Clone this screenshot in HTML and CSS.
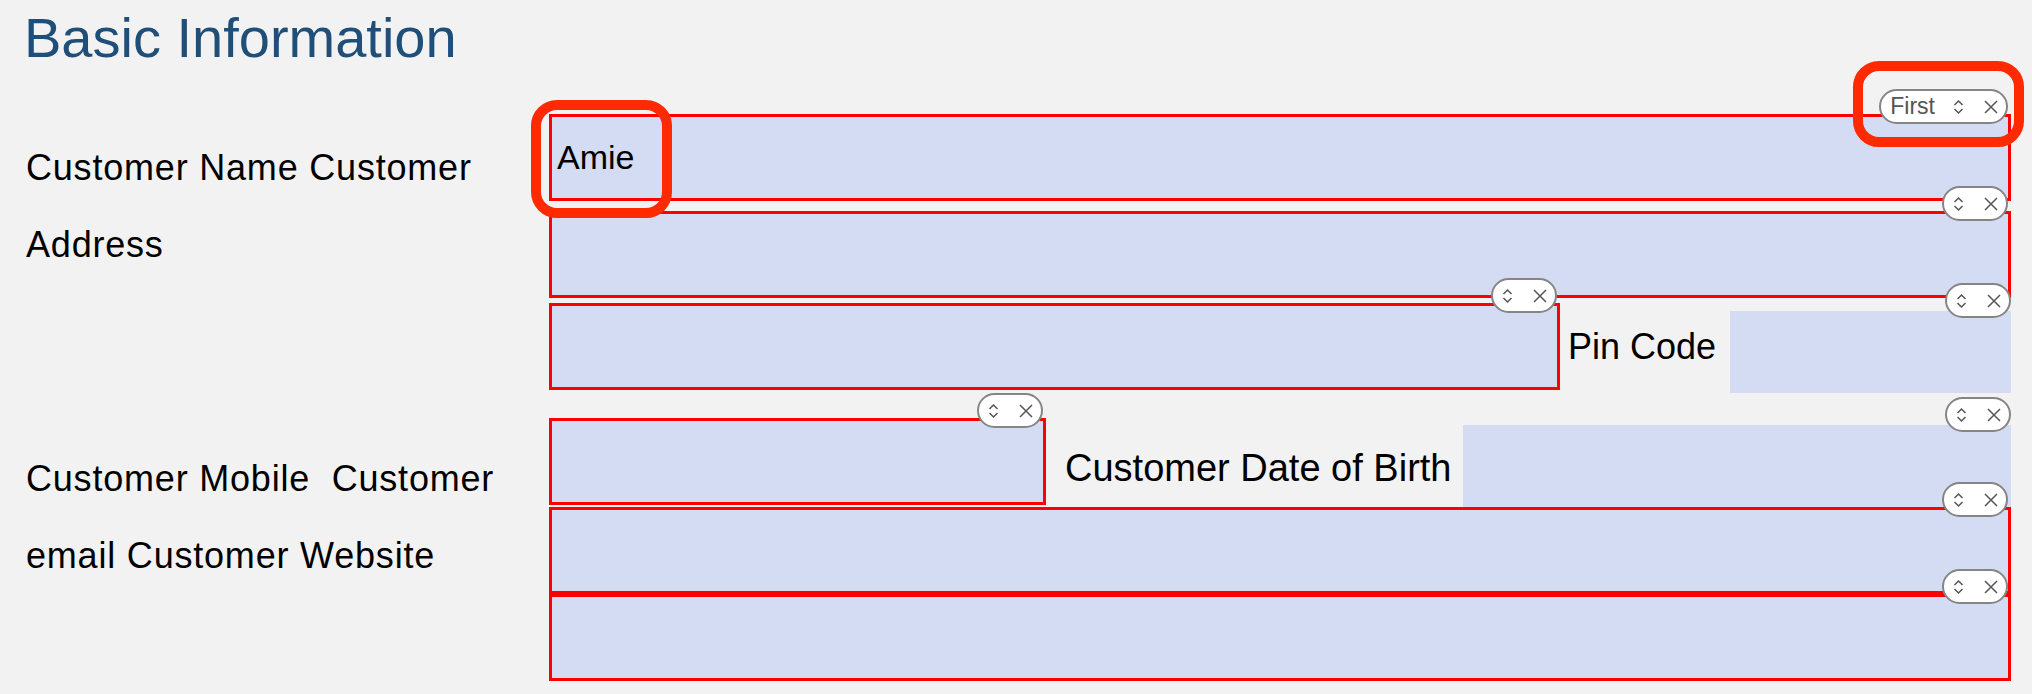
FILE: index.html
```html
<!DOCTYPE html>
<html lang="en">
  <head>
    <meta charset="UTF-8" />
    <title>Basic Information</title>
    <link rel="stylesheet" href="styles.css">
  </head>
  <body>
    <div class="page">
      <h1 class="title">Basic Information</h1>

      <!-- name / address -->
      <div class="section">
        <p class="labels labelsName">Customer Name Customer Address</p>
        <div class="fields">
          <div class="field fieldName">
            <span class="value">Amie</span>
            <span class="pill">
              <span class="pillText">First</span>
              <svg class="iconUpDown" width="11" height="16" viewBox="0 0 11 16"><path d="M1.5 6 L5.5 2 L9.5 6 M1.5 10 L5.5 14 L9.5 10" /></svg>
              <svg class="iconClose" width="14" height="14" viewBox="0 0 14 14"><path d="M1 1 L13 13 M13 1 L1 13" /></svg>
            </span>
            <span class="mark markValue"></span>
            <span class="mark markTag"></span>
          </div>
          <div class="field fieldAddress">
            <span class="pill">
              <svg class="iconUpDown" width="11" height="16" viewBox="0 0 11 16"><path d="M1.5 6 L5.5 2 L9.5 6 M1.5 10 L5.5 14 L9.5 10" /></svg>
              <svg class="iconClose" width="14" height="14" viewBox="0 0 14 14"><path d="M1 1 L13 13 M13 1 L1 13" /></svg>
            </span>
          </div>
          <div class="row rowPin">
            <div class="field fieldAddress2">
              <span class="pill">
                <svg class="iconUpDown" width="11" height="16" viewBox="0 0 11 16"><path d="M1.5 6 L5.5 2 L9.5 6 M1.5 10 L5.5 14 L9.5 10" /></svg>
                <svg class="iconClose" width="14" height="14" viewBox="0 0 14 14"><path d="M1 1 L13 13 M13 1 L1 13" /></svg>
              </span>
            </div>
            <span class="inlineLabel labelPin">Pin Code</span>
            <div class="field plain fieldPin">
              <span class="pill">
                <svg class="iconUpDown" width="11" height="16" viewBox="0 0 11 16"><path d="M1.5 6 L5.5 2 L9.5 6 M1.5 10 L5.5 14 L9.5 10" /></svg>
                <svg class="iconClose" width="14" height="14" viewBox="0 0 14 14"><path d="M1 1 L13 13 M13 1 L1 13" /></svg>
              </span>
            </div>
          </div>
        </div>
      </div>

      <!-- contact -->
      <div class="section sectionContact">
        <p class="labels labelsContact">Customer Mobile&nbsp; Customer email Customer Website</p>
        <div class="fields">
          <div class="row rowBirth">
            <div class="field fieldMobile">
              <span class="pill">
                <svg class="iconUpDown" width="11" height="16" viewBox="0 0 11 16"><path d="M1.5 6 L5.5 2 L9.5 6 M1.5 10 L5.5 14 L9.5 10" /></svg>
                <svg class="iconClose" width="14" height="14" viewBox="0 0 14 14"><path d="M1 1 L13 13 M13 1 L1 13" /></svg>
              </span>
            </div>
            <span class="inlineLabel labelBirth">Customer Date of Birth</span>
            <div class="field plain fieldBirth">
              <span class="pill">
                <svg class="iconUpDown" width="11" height="16" viewBox="0 0 11 16"><path d="M1.5 6 L5.5 2 L9.5 6 M1.5 10 L5.5 14 L9.5 10" /></svg>
                <svg class="iconClose" width="14" height="14" viewBox="0 0 14 14"><path d="M1 1 L13 13 M13 1 L1 13" /></svg>
              </span>
            </div>
          </div>
          <div class="field fieldEmail">
            <span class="pill">
              <svg class="iconUpDown" width="11" height="16" viewBox="0 0 11 16"><path d="M1.5 6 L5.5 2 L9.5 6 M1.5 10 L5.5 14 L9.5 10" /></svg>
              <svg class="iconClose" width="14" height="14" viewBox="0 0 14 14"><path d="M1 1 L13 13 M13 1 L1 13" /></svg>
            </span>
          </div>
          <div class="field fieldWebsite">
            <span class="pill">
              <svg class="iconUpDown" width="11" height="16" viewBox="0 0 11 16"><path d="M1.5 6 L5.5 2 L9.5 6 M1.5 10 L5.5 14 L9.5 10" /></svg>
              <svg class="iconClose" width="14" height="14" viewBox="0 0 14 14"><path d="M1 1 L13 13 M13 1 L1 13" /></svg>
            </span>
          </div>
        </div>
      </div>
    </div>
  </body>
</html>
```

FILE: styles.css
```css
body {
  margin: 0;
  background-color: #f2f2f2;
  font-family: "Liberation Sans", Arial, sans-serif;
  color: #000;
}

.page {
  padding: 10px 21px 0 26px;
}

.title {
  margin: 0 0 49px -2px;
  font-size: 56px;
  line-height: 55px;
  font-weight: normal;
  color: #1f4e79;
}

.section {
  display: grid;
  grid-template-columns: 523px 1fr;
}
.sectionContact {
  margin-top: 25px;
}

.labels {
  margin: 0;
  font-size: 36px;
  line-height: 77px;
  letter-spacing: 0.8px;
}
.labelsName {
  padding-top: 15px;
}
.labelsContact {
  padding-top: 22px;
}

.fields {
  display: flex;
  flex-direction: column;
}
.row {
  display: flex;
  align-items: flex-start;
}

.field {
  position: relative;
  box-sizing: border-box;
  height: 87px;
  border: 3px solid #ff0000;
  background-color: #d4dcf3;
  display: flex;
  align-items: center;
}
.field.plain {
  border: none;
}

.value {
  padding-left: 5px;
  font-size: 34px;
}

.fieldAddress {
  margin-top: 10px;
}
.rowPin {
  margin-top: 5px;
}
.fieldAddress2 {
  flex: 0 0 1011px;
}
.fieldPin {
  flex: 1;
  height: 82px;
  margin-top: 8px;
}
.fieldMobile {
  flex: 0 0 497px;
}
.fieldBirth {
  flex: 1;
  height: 85px;
  margin-top: 7px;
}
.fieldEmail {
  margin-top: -3px;
}

.inlineLabel {
  white-space: nowrap;
}
.labelPin {
  margin: 26px 14px 0 8px;
  font-size: 36px;
  line-height: 36px;
}
.labelBirth {
  margin: 31px 12px 0 19px;
  font-size: 38px;
  line-height: 38px;
}

/* content control tag */
.pill {
  position: absolute;
  top: -28px;
  right: 0;
  z-index: 1;
  box-sizing: border-box;
  height: 35px;
  display: flex;
  align-items: center;
  padding: 0 8px 0 9px;
  background-color: #fff;
  border: 2px solid #858585;
  border-radius: 18px;
}
.pillText {
  margin-right: 18px;
  font-size: 23px;
  color: #555;
}
.pill svg {
  fill: none;
  stroke: #555;
  stroke-width: 1.5;
}
.iconClose {
  margin-left: 20px;
}

/* highlight marks */
.mark {
  position: absolute;
  z-index: 2;
  border: 10px solid #ff2a00;
  border-radius: 26px;
}
.markValue {
  left: -21px;
  top: -17px;
  width: 121px;
  height: 98px;
}
.markTag {
  right: -16px;
  top: -56px;
  width: 151px;
  height: 66px;
}
```
